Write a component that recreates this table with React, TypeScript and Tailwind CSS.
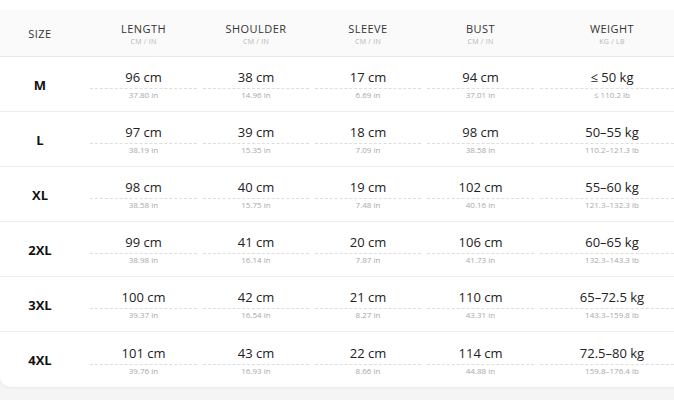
const rows = [
  { size: "M", length: ["96 cm", "37.80 in"], shoulder: ["38 cm", "14.96 in"], sleeve: ["17 cm", "6.69 in"], bust: ["94 cm", "37.01 in"], weight: ["≤ 50 kg", "≤ 110.2 lb"] },
  { size: "L", length: ["97 cm", "38.19 in"], shoulder: ["39 cm", "15.35 in"], sleeve: ["18 cm", "7.09 in"], bust: ["98 cm", "38.58 in"], weight: ["50–55 kg", "110.2–121.3 lb"] },
  { size: "XL", length: ["98 cm", "38.58 in"], shoulder: ["40 cm", "15.75 in"], sleeve: ["19 cm", "7.48 in"], bust: ["102 cm", "40.16 in"], weight: ["55–60 kg", "121.3–132.3 lb"] },
  { size: "2XL", length: ["99 cm", "38.98 in"], shoulder: ["41 cm", "16.14 in"], sleeve: ["20 cm", "7.87 in"], bust: ["106 cm", "41.73 in"], weight: ["60–65 kg", "132.3–143.3 lb"] },
  { size: "3XL", length: ["100 cm", "39.37 in"], shoulder: ["42 cm", "16.54 in"], sleeve: ["21 cm", "8.27 in"], bust: ["110 cm", "43.31 in"], weight: ["65–72.5 kg", "143.3–159.8 lb"] },
  { size: "4XL", length: ["101 cm", "39.76 in"], shoulder: ["43 cm", "16.93 in"], sleeve: ["22 cm", "8.66 in"], bust: ["114 cm", "44.88 in"], weight: ["72.5–80 kg", "159.8–176.4 lb"] },
];

const columns = [
  { label: "LENGTH", unit: "CM / IN" },
  { label: "SHOULDER", unit: "CM / IN" },
  { label: "SLEEVE", unit: "CM / IN" },
  { label: "BUST", unit: "CM / IN" },
  { label: "WEIGHT", unit: "KG / LB" },
];

const grid = "grid grid-cols-[87px_113px_112px_112px_113px_150px]";

function Cell({ value }: { value: string[] }) {
  return (
    <div className="flex flex-col justify-center">
      <div className="mx-[3px] border-b border-dashed border-[#dedede] pb-[2px] text-center text-[13px] leading-[18px] text-[#222]">
        {value[0]}
      </div>
      <div className="text-center text-[8px] leading-[11px] text-[#a8a8a8]">{value[1]}</div>
    </div>
  );
}

export default function App() {
  return (
    <div className="h-[400px] w-[674px] overflow-hidden bg-[#f5f5f5]" style={{ fontFamily: '"Open Sans", "Noto Sans", sans-serif' }}>
      <div className="w-[687px] rounded-b-[10px] bg-white pt-[10px] shadow-[0_1px_3px_rgba(0,0,0,0.06)]">
        <div className={`${grid} h-[47px] border-b border-[#e9e9e9] bg-[#fafafa]`}>
          <div className="flex items-center justify-center pr-[7px] pt-[2px] text-[11px] tracking-[0.04em] text-[#333]">SIZE</div>
          {columns.map((c) => (
            <div key={c.label} className="flex flex-col items-center justify-center pt-[2px]">
              <span className="text-[11px] leading-[15px] tracking-[0.04em] text-[#333]">{c.label}</span>
              <span className="text-[7px] leading-[11px] tracking-[0.04em] text-[#b5b5b5]">{c.unit}</span>
            </div>
          ))}
        </div>
        {rows.map((r, i) => (
          <div key={r.size} className={`${grid} h-[55px] ${i < rows.length - 1 ? "border-b border-[#ededed]" : ""}`}>
            <div className="flex items-center justify-center pr-[7px] pt-[3px] text-[13px] font-bold text-[#111]">{r.size}</div>
            <Cell value={r.length} />
            <Cell value={r.shoulder} />
            <Cell value={r.sleeve} />
            <Cell value={r.bust} />
            <Cell value={r.weight} />
          </div>
        ))}
      </div>
    </div>
  );
}
